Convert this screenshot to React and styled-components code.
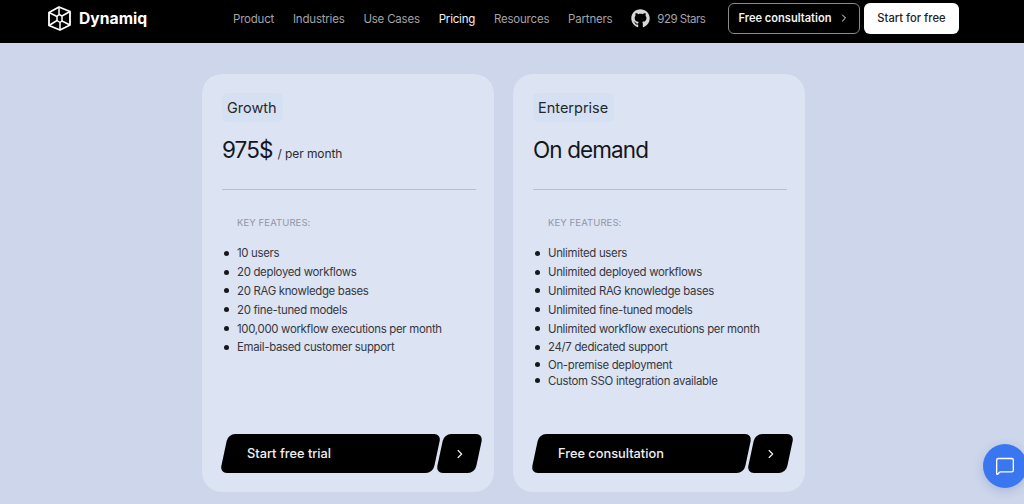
import React from 'react';
import styled, { createGlobalStyle } from 'styled-components';
import { FaGithub } from 'react-icons/fa';
import { ChevronRight, MessageSquare } from 'lucide-react';

const GlobalStyle = createGlobalStyle`
	html, body {
		margin: 0;
		height: 100%;
		overflow: hidden;
		background: #cdd6ea;
		font-family: Inter, "Liberation Sans", sans-serif;
	}
	* { box-sizing: border-box; }
`;

const Header = styled.header`
	height: 43px;
	background: #000;
	display: flex;
	align-items: center;
	padding: 0 65px 6px 48px;
	white-space: nowrap;
`;

const Logo = styled.div`
	display: flex;
	align-items: center;
	gap: 8px;
	color: #fff;
	font-size: 15.7px;
	font-weight: 700;
	width: 185px;
`;

const Nav = styled.nav`
	display: flex;
	align-items: center;
	gap: 18.8px;
	flex: 1;
`;

const NavLink = styled.span`
	font-size: 11.5px;
	letter-spacing: -0.2px;
	color: ${props => (props.$active ? '#f2f2f2' : '#a3a3a8')};
`;

const Stars = styled.span`
	display: flex;
	align-items: center;
	gap: 7px;
	font-size: 11.5px;
	letter-spacing: -0.5px;
	color: #a3a3a8;
`;

const Actions = styled.div`
	display: flex;
	gap: 4px;
	margin-top: -1px;
`;

const OutlineButton = styled.div`
	width: 132px;
	height: 31px;
	border: 1px solid #8a8a8a;
	border-radius: 6px;
	color: #f4f4f4;
	font-size: 11.1px;
	font-weight: 600;
	display: flex;
	align-items: center;
	justify-content: center;
	gap: 6px;
`;

const WhiteButton = styled.div`
	width: 95px;
	height: 31px;
	background: #fff;
	border-radius: 6px;
	color: #222;
	font-size: 11.2px;
	font-weight: 500;
	display: flex;
	align-items: center;
	justify-content: center;
`;

const Main = styled.main`
	display: flex;
	justify-content: center;
	gap: 19px;
	padding: 31px 17px 0 0;
`;

const Card = styled.section`
	width: 292px;
	height: 418px;
	background: #dce3f3;
	border-radius: 20px;
	padding: 19px 18px 19px 19px;
	display: flex;
	flex-direction: column;
`;

const Tag = styled.div`
	align-self: flex-start;
	height: 29px;
	margin-left: 1px;
	padding: 0 6px 0 5px;
	background: #d5e1f2;
	border-radius: 5px;
	font-size: 14.5px;
	color: #26272d;
	display: flex;
	align-items: center;
`;

const PriceRow = styled.div`
	height: 68px;
	display: flex;
	align-items: center;
	gap: 5px;
	padding-bottom: 13px;
	border-bottom: 1px solid #b7bdcf;
	margin-left: 1px;
`;

const Price = styled.span`
	font-size: 22.5px;
	letter-spacing: -0.9px;
	color: #15161a;
`;

const Period = styled.span`
	font-size: 12px;
	letter-spacing: -0.1px;
	color: #2a2b31;
	margin-top: 8px;
`;

const FeaturesLabel = styled.div`
	margin: 27px 0 0 16px;
	font-size: 9.5px;
	letter-spacing: 0.1px;
	color: #9196a5;
	line-height: 12px;
`;

const FeatureList = styled.ul`
	list-style: none;
	margin: 15px 0 0 3px;
	padding: 0;
	flex: 1;
`;

const Feature = styled.li`
	display: flex;
	align-items: center;
	gap: 8px;
	height: ${props => (props.$compact ? '16px' : '18.8px')};
	font-size: 11.4px;
	letter-spacing: -0.3px;
	color: #363840;

	&::before {
		content: '';
		width: 5px;
		height: 5px;
		border-radius: 50%;
		background: #17181c;
	}
`;

const ButtonRow = styled.div`
	display: flex;
	gap: 4px;
	padding-left: 2.5px;
	margin-right: -3px;
`;

const SkewButton = styled.div`
	flex-shrink: 0;
	height: 39px;
	background: #000;
	border-radius: 7px;
	transform: skewX(-12deg);
	color: #f0f0f0;
	display: flex;
	align-items: center;
`;

const MainButton = styled(SkewButton)`
	width: 212.5px;
	padding-left: 22.5px;
	font-size: 12.8px;
	font-weight: 500;
`;

const ArrowButton = styled(SkewButton)`
	width: 39px;
	justify-content: center;
`;

const Unskew = styled.span`
	display: flex;
	transform: skewX(12deg);
`;

const ChatBubble = styled.div`
	position: fixed;
	left: 983px;
	top: 444px;
	width: 44px;
	height: 44px;
	border-radius: 50%;
	background: #3b76f1;
	box-shadow: 0 3px 10px rgba(60, 90, 170, 0.25);
	color: #fff;
	display: flex;
	align-items: center;
	justify-content: center;
`;

function LogoMark() {
	return (
		<svg width="23" height="25" viewBox="0 0 23 25" fill="none" stroke="#fff" strokeWidth="1.8" strokeLinejoin="round">
			<path d="M1 6.5 L11 1 L22 5.5 V19 L12 24 L1 19.5 Z" />
			<path d="M1 6.5 L9 10.5 V14.5 L1 19.5 M22 5.5 L14 10 V15 L22 19 M11 1 V8.5 L14 10 M12 24 V16.5 L9 14.5 M9 10.5 L11 8.5 M14 15 L12 16.5" strokeWidth="1.5" />
		</svg>
	);
}

const growthFeatures = [
	'10 users',
	'20 deployed workflows',
	'20 RAG knowledge bases',
	'20 fine-tuned models',
	'100,000 workflow executions per month',
	'Email-based customer support',
];

const enterpriseFeatures = [
	'Unlimited users',
	'Unlimited deployed workflows',
	'Unlimited RAG knowledge bases',
	'Unlimited fine-tuned models',
	'Unlimited workflow executions per month',
	'24/7 dedicated support',
];

const enterpriseExtras = ['On-premise deployment', 'Custom SSO integration available'];

function PlanCard({ name, price, period, features, extras = [], cta }) {
	return (
		<Card>
			<Tag>{name}</Tag>
			<PriceRow>
				<Price>{price}</Price>
				{period && <Period>{period}</Period>}
			</PriceRow>
			<FeaturesLabel>KEY FEATURES:</FeaturesLabel>
			<FeatureList>
				{features.map(item => <Feature key={item}>{item}</Feature>)}
				{extras.map(item => <Feature key={item} $compact>{item}</Feature>)}
			</FeatureList>
			<ButtonRow>
				<MainButton><Unskew>{cta}</Unskew></MainButton>
				<ArrowButton><Unskew><ChevronRight size={14} /></Unskew></ArrowButton>
			</ButtonRow>
		</Card>
	);
}

export default function App() {
	return (
		<>
			<GlobalStyle />
			<Header>
				<Logo><LogoMark />Dynamiq</Logo>
				<Nav>
					<NavLink>Product</NavLink>
					<NavLink>Industries</NavLink>
					<NavLink>Use Cases</NavLink>
					<NavLink $active>Pricing</NavLink>
					<NavLink>Resources</NavLink>
					<NavLink>Partners</NavLink>
					<Stars><FaGithub size={19} color="#d8d8d8" />929 Stars</Stars>
				</Nav>
				<Actions>
					<OutlineButton>Free consultation <ChevronRight size={12} /></OutlineButton>
					<WhiteButton>Start for free</WhiteButton>
				</Actions>
			</Header>
			<Main>
				<PlanCard name="Growth" price="975$" period="/ per month" features={growthFeatures} cta="Start free trial" />
				<PlanCard name="Enterprise" price="On demand" features={enterpriseFeatures} extras={enterpriseExtras} cta="Free consultation" />
			</Main>
			<ChatBubble><MessageSquare size={20} strokeWidth={1.6} /></ChatBubble>
		</>
	);
}
